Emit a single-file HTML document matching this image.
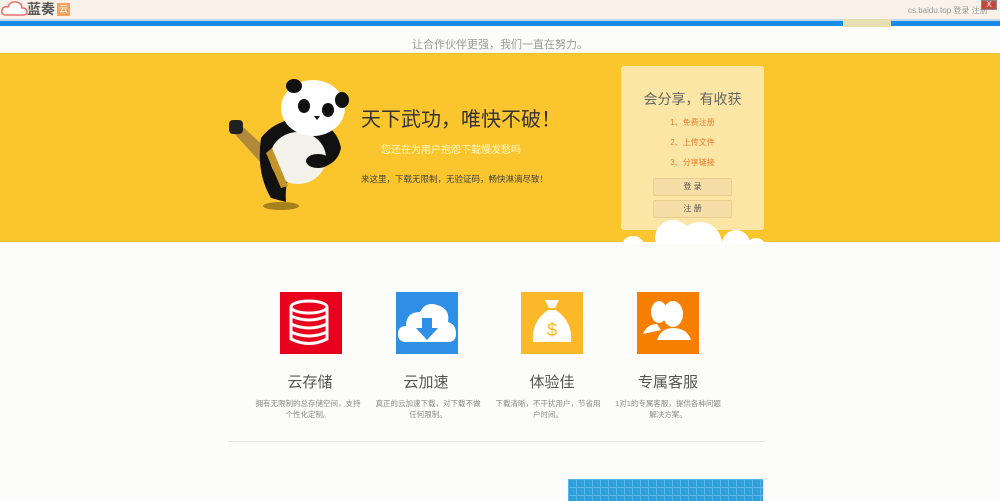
<!DOCTYPE html><html><head><meta charset="utf-8"><style>
*{margin:0;padding:0;box-sizing:border-box}
body{width:1000px;height:501px;overflow:hidden;background:#fcfcfa;font-family:"Liberation Sans","Noto Sans CJK SC",sans-serif;position:relative}
.a{position:absolute}
.t{position:absolute;text-align:center}
</style></head><body>
<div class="a" style="left:0;top:0;width:1000px;height:19px;background:#faf2e8"></div>
<svg class="a" style="left:0;top:0" width="30" height="18"><path d="M6 15 Q1 15 2 10 Q3 6 8 7 Q10 1 16 2 Q22 3 22 8 Q27 8 27 12 Q27 15 23 15 Z" fill="#fff" stroke="#e9706a" stroke-width="1.5"/></svg>
<div class="a" style="left:27px;top:1px;font-size:14px;line-height:17px;color:#555;font-weight:bold">蓝奏</div>
<div class="a" style="left:57px;top:3px;width:13px;height:13px;background:#f3a25c;color:#fff;font-size:9px;text-align:center;line-height:13px">云</div>
<div class="a" style="left:908px;top:5px;font-size:8px;color:#999">cs.baidu.top 登录 注册</div>
<div class="a" style="left:981px;top:0;width:16px;height:10px;background:#c8473d;border:1px solid #888;color:#fff;font-size:8px;text-align:center;line-height:8px">X</div>
<div class="a" style="left:0;top:19px;width:1000px;height:2px;background:#bcd9ef"></div>
<div class="a" style="left:0;top:21px;width:1000px;height:5px;background:#1a8ce8"></div>
<div class="a" style="left:843px;top:19px;width:48px;height:8px;background:#e6dfb0"></div>
<div class="t" style="left:0;top:36px;width:1000px;font-size:11px;color:#999">让合作伙伴更强，我们一直在努力。</div>
<div class="a" style="left:0;top:53px;width:1000px;height:189px;background:#fbc52d"></div>
<svg class="a" style="left:226px;top:78px" width="130" height="134">
<ellipse cx="55" cy="128" rx="18" ry="4" fill="#6b5310" opacity=".6"/>
<path d="M40 70 L18 50 L10 45 L5 52 L35 85 Z" fill="#b08a3a"/>
<rect x="3" y="42" width="14" height="14" rx="4" fill="#222"/>
<path d="M35 60 Q30 95 45 120 L60 124 Q58 100 70 90 Q110 95 115 70 Q110 45 80 40 Q50 40 35 60Z" fill="#111"/>
<ellipse cx="72" cy="80" rx="28" ry="26" fill="#f2f2ea"/>
<path d="M40 75 L55 110 L62 108 L46 70Z" fill="#c2942a"/>
<ellipse cx="87" cy="30" rx="32" ry="28" fill="#fff"/>
<ellipse cx="68" cy="8" rx="8" ry="7" fill="#111"/>
<ellipse cx="116" cy="22" rx="7" ry="8" fill="#111"/>
<ellipse cx="78" cy="28" rx="6" ry="7" fill="#111"/>
<ellipse cx="102" cy="32" rx="6" ry="7" fill="#111"/>
<path d="M88 38 L94 38 L91 42Z" fill="#111"/>
<ellipse cx="92" cy="83" rx="12" ry="7" fill="#111"/>
</svg>
<div class="a" style="left:361px;top:103px;font-size:20px;color:#333">天下武功，唯快不破！</div>
<div class="a" style="left:381px;top:141px;font-size:10px;color:#fff8c8">您还在为用户抱怨下载慢发愁吗</div>
<div class="a" style="left:361px;top:173px;font-size:8.5px;color:#444">来这里，下载无限制，无验证码，畅快淋漓尽致！</div>
<div class="a" style="left:621px;top:66px;width:143px;height:164px;background:#fce6a5;border-radius:3px"></div>
<div class="t" style="left:621px;top:89px;width:143px;font-size:14px;color:#666">会分享，有收获</div>
<div class="t" style="left:621px;top:117px;width:143px;font-size:8px;color:#f07b2b">1、免费注册</div>
<div class="t" style="left:621px;top:137px;width:143px;font-size:8px;color:#f07b2b">2、上传文件</div>
<div class="t" style="left:621px;top:157px;width:143px;font-size:8px;color:#f07b2b">3、分享链接</div>
<div class="t" style="left:653px;top:178px;width:79px;height:18px;background:#f6dfa6;border:1px solid #e8cf90;border-radius:2px;font-size:8px;line-height:16px;color:#555">登 录</div>
<div class="t" style="left:653px;top:200px;width:79px;height:18px;background:#f6dfa6;border:1px solid #e8cf90;border-radius:2px;font-size:8px;line-height:16px;color:#555">注 册</div>
<svg class="a" style="left:608px;top:214px" width="165" height="30"><g fill="#fff"><circle cx="65" cy="24" r="18"/><circle cx="92" cy="30" r="22"/><circle cx="128" cy="30" r="14"/><circle cx="25" cy="34" r="12"/><circle cx="148" cy="34" r="10"/></g></svg>
<div class="a" style="left:280px;top:292px;width:62px;height:62px;background:#e8001c"></div>
<svg class="a" style="left:280px;top:292px" width="62" height="62" fill="none" stroke="#fff" stroke-width="3"><ellipse cx="29" cy="15" rx="18" ry="6"/><path d="M11 15V47Q29 56 47 47V15M11 24Q29 32 47 24M11 32Q29 40 47 32M11 40Q29 48 47 40"/></svg>
<div class="a" style="left:396px;top:292px;width:62px;height:62px;background:#2f8fe6"></div>
<svg class="a" style="left:396px;top:292px" width="62" height="62"><path d="M10 50 Q2 50 2 42 Q2 34 10 34 Q10 20 24 20 Q30 8 44 14 Q54 18 52 30 Q60 32 60 42 Q60 50 52 50Z" fill="#fff"/><path d="M26 26h10v10h6L31 48 20 36h6z" fill="#2f8fe6"/></svg>
<div class="a" style="left:521px;top:292px;width:62px;height:62px;background:#fbb829"></div>
<svg class="a" style="left:521px;top:292px" width="62" height="62"><path d="M24 8h14l-4 8h-6z" fill="#fff"/><path d="M27 18h8Q52 30 50 50H12Q10 30 27 18Z" fill="#fff"/><text x="31" y="44" font-size="18" fill="#fbb829" text-anchor="middle" font-family="Liberation Sans">$</text></svg>
<div class="a" style="left:637px;top:292px;width:62px;height:62px;background:#f77f00"></div>
<svg class="a" style="left:637px;top:292px" width="62" height="62" fill="#fff"><ellipse cx="22" cy="20" rx="8" ry="11"/><ellipse cx="36" cy="22" rx="10" ry="13"/><path d="M6 42Q10 32 20 32L24 38Z"/><path d="M20 48Q24 36 36 36Q50 36 54 48Z"/></svg>
<div class="t" style="left:250px;top:371px;width:120px;font-size:15px;color:#555">云存储</div>
<div class="t" style="left:366px;top:371px;width:120px;font-size:15px;color:#555">云加速</div>
<div class="t" style="left:492px;top:371px;width:120px;font-size:15px;color:#555">体验佳</div>
<div class="t" style="left:608px;top:371px;width:120px;font-size:15px;color:#555">专属客服</div>
<div class="t" style="left:252px;top:398px;width:112px;font-size:7.5px;line-height:11px;color:#888">拥有无限制的总存储空间，支持个性化定制。</div>
<div class="t" style="left:372px;top:398px;width:112px;font-size:7.5px;line-height:11px;color:#888">真正的云加速下载，对下载不做任何限制。</div>
<div class="t" style="left:492px;top:398px;width:112px;font-size:7.5px;line-height:11px;color:#888">下载清晰，不干扰用户，节省用户时间。</div>
<div class="t" style="left:612px;top:398px;width:112px;font-size:7.5px;line-height:11px;color:#888">1对1的专属客服，提供各种问题解决方案。</div>
<div class="a" style="left:228px;top:441px;width:537px;height:1px;background:#e6e6e6"></div>
<div class="a" style="left:568px;top:479px;width:195px;height:22px;background:#2ea0dc;background-image:linear-gradient(#5ab6e6 1px,transparent 1px),linear-gradient(90deg,#5ab6e6 1px,transparent 1px);background-size:8px 8px"></div>
</body></html>
